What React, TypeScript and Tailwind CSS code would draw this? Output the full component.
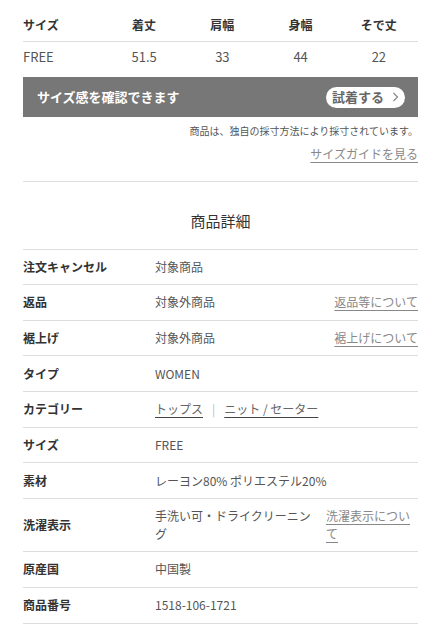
import React from 'react';

const sizeHead = ['着丈', '肩幅', '身幅', 'そで丈'];
const sizeVals = ['51.5', '33', '44', '22'];

interface Row {
  label: string;
  value: React.ReactNode;
  link?: string;
}

const rows: Row[] = [
  { label: '注文キャンセル', value: '対象商品' },
  { label: '返品', value: '対象外商品', link: '返品等について' },
  { label: '裾上げ', value: '対象外商品', link: '裾上げについて' },
  { label: 'タイプ', value: 'WOMEN' },
  {
    label: 'カテゴリー',
    value: (
      <span>
        <span className="underline underline-offset-[3px] text-[#666] decoration-[#444]">トップス</span>
        <span className="text-[#bbb] mx-[9px]">|</span>
        <span className="underline underline-offset-[3px] text-[#666] decoration-[#444]">ニット / セーター</span>
      </span>
    ),
  },
  { label: 'サイズ', value: 'FREE' },
  { label: '素材', value: 'レーヨン80% ポリエステル20%' },
  { label: '洗濯表示', value: '手洗い可・ドライクリーニング', link: '洗濯表示について' },
  { label: '原産国', value: '中国製' },
  { label: '商品番号', value: '1518-106-1721' },
];

export default function App() {
  return (
    <div
      className="bg-white min-h-[635px] w-[444px] text-[12px] text-[#555]"
      style={{ fontFamily: '"Noto Sans CJK JP", "Noto Sans", sans-serif' }}
    >
      <div className="ml-[23px] w-[395px]">
        {/* Size table */}
        <div className="grid grid-cols-[82px_repeat(4,1fr)] h-[42px] pt-[8px] items-center border-b border-[#ddd] font-bold text-[#333]">
          <div>サイズ</div>
          {sizeHead.map((h) => (
            <div key={h} className="text-center">{h}</div>
          ))}
        </div>
        <div className="grid grid-cols-[82px_repeat(4,1fr)] h-[30px] items-center text-[13px] text-[#555]">
          <div>FREE</div>
          {sizeVals.map((v) => (
            <div key={v} className="text-center">{v}</div>
          ))}
        </div>

        {/* Try-on bar */}
        <div className="mt-[5px] h-[40px] bg-[#777] flex items-center justify-between pl-[14px] pr-[13px]">
          <span className="text-white font-bold text-[13px]">サイズ感を確認できます</span>
          <span className="bg-white rounded-full h-[21px] w-[79px] flex items-center justify-center gap-[8px] text-[#666] font-bold text-[13px]">
            試着する
            <svg width="7" height="10" viewBox="0 0 7 10" fill="none">
              <path d="M1.5 1l4 4-4 4" stroke="#888" strokeWidth="1.2" />
            </svg>
          </span>
        </div>

        <p className="text-right text-[10px] text-[#555] mt-[7px] leading-[14px]">
          商品は、独自の採寸方法により採寸されています。
        </p>
        <p className="text-right mt-[8px] leading-[16px]">
          <span className="underline underline-offset-[3px] text-[#888]">サイズガイドを見る</span>
        </p>

        <div className="mt-[19px] border-t border-[#ddd]" />

        <h2 className="text-center text-[15px] text-[#333] mt-[28px] leading-[22px]">商品詳細</h2>

        {/* Detail table */}
        <div className="mt-[17px] border-t border-[#ddd]">
          {rows.map((r, i) => (
            <div
              key={r.label}
              className={`flex items-center border-b border-[#ddd] ${i === 0 ? 'min-h-[34px]' : 'min-h-[35.7px]'}`}
            >
              <div className="w-[132px] shrink-0 font-bold text-[#333]">{r.label}</div>
              <div className="flex-1 min-w-0 py-[8px] leading-[18px]">{r.value}</div>
              {r.link && (
                <div className="max-w-[92px] ml-[10px] py-[8px] leading-[18px]">
                  <span className="underline underline-offset-[3px] text-[#888]">{r.link}</span>
                </div>
              )}
            </div>
          ))}
        </div>
      </div>
    </div>
  );
}
